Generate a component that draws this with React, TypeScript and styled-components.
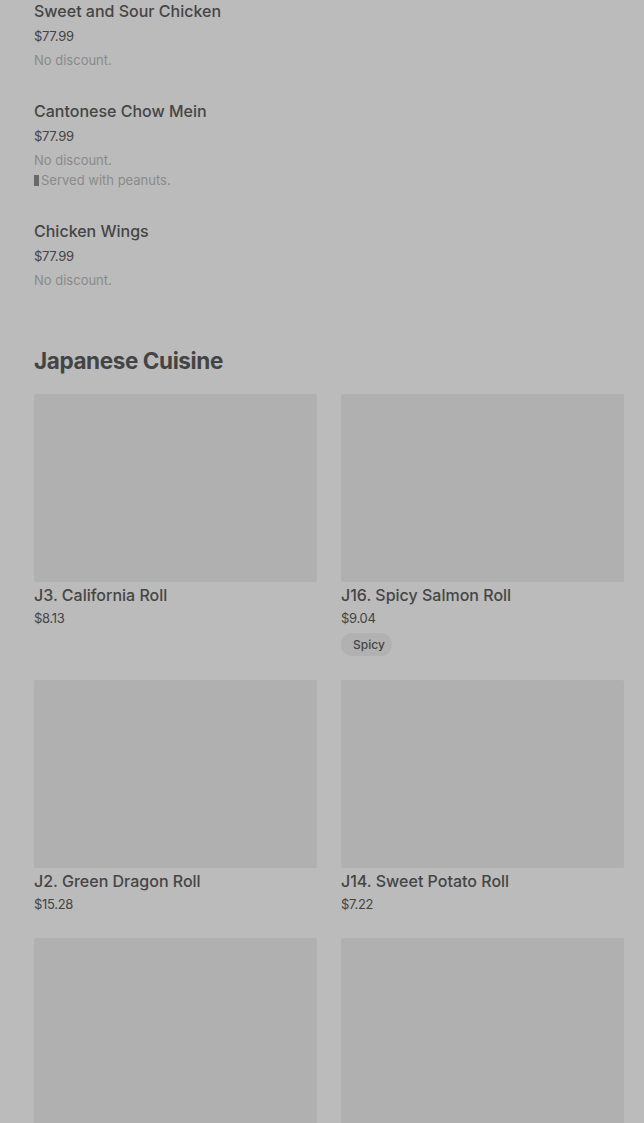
import React from "react";
import styled, { createGlobalStyle } from "styled-components";

const GlobalStyle = createGlobalStyle`
  html, body {
    margin: 0;
    padding: 0;
    background: #bbbbbb;
  }
  body {
    font-family: Inter, "Noto Sans", Roboto, sans-serif;
    color: #464646;
  }
`;

const Page = styled.div`
  padding: 0 20px 0 34px;
  height: 1123px;
  overflow: hidden;
`;

const List = styled.div`
  display: flex;
  flex-direction: column;
  gap: 30px;
`;

const Item = styled.div`
  display: flex;
  flex-direction: column;
`;

const Name = styled.div`
  font-size: 16px;
  line-height: 22px;
  font-weight: 500;
  color: #454545;
`;

const Price = styled.div`
  margin: 4px 0 4px;
  font-size: 13px;
  line-height: 20px;
  color: #444;
  letter-spacing: -0.3px;
`;

const Note = styled.div`
  font-size: 13px;
  line-height: 20px;
  color: #8a8a8a;
`;

const Mark = styled.span`
  display: inline-block;
  width: 5px;
  height: 11px;
  margin-right: 2px;
  vertical-align: -1px;
  background: #6a6a6a;
`;

const Heading = styled.h2`
  margin: 57px 0 19px;
  font-size: 22.5px;
  line-height: 28px;
  font-weight: 700;
  letter-spacing: -0.4px;
  color: #444;
`;

const Grid = styled.div`
  display: grid;
  grid-template-columns: 1fr 1fr;
  column-gap: 24px;
  row-gap: 24px;
`;

const Card = styled.div`
  display: flex;
  flex-direction: column;
`;

const Thumb = styled.div`
  height: 188px;
  background: #b0b0b0;
  border-radius: 2px;
`;

const CardName = styled.div`
  margin-top: 2px;
  font-size: 16px;
  line-height: 22px;
  font-weight: 500;
  color: #454545;
`;

const CardPrice = styled.div`
  margin-top: 2px;
  font-size: 13px;
  line-height: 20px;
  color: #444;
  letter-spacing: -0.3px;
`;

const Tag = styled.span`
  align-self: flex-start;
  margin-top: 5px;
  padding: 0 7px 0 12px;
  height: 23px;
  line-height: 23px;
  font-size: 12px;
  font-weight: 500;
  color: #444;
  background: #b1b1b1;
  border-radius: 12px;
`;

type Dish = { name: string; price: string; notes: React.ReactNode[] };
type Roll = { name: string; price: string; tag?: string };

const dishes: Dish[] = [
  { name: "Sweet and Sour Chicken", price: "$77.99", notes: ["No discount."] },
  {
    name: "Cantonese Chow Mein",
    price: "$77.99",
    notes: [
      "No discount.",
      <>
        <Mark />
        Served with peanuts.
      </>,
    ],
  },
  { name: "Chicken Wings", price: "$77.99", notes: ["No discount."] },
];

const rolls: Roll[] = [
  { name: "J3. California Roll", price: "$8.13" },
  { name: "J16. Spicy Salmon Roll", price: "$9.04", tag: "Spicy" },
  { name: "J2. Green Dragon Roll", price: "$15.28" },
  { name: "J14. Sweet Potato Roll", price: "$7.22" },
  { name: "J5. Rainbow Roll", price: "$12.50" },
  { name: "J9. Eel Avocado Roll", price: "$10.75" },
];

export default function App() {
  return (
    <>
      <GlobalStyle />
      <Page>
        <List>
          {dishes.map((d) => (
            <Item key={d.name}>
              <Name>{d.name}</Name>
              <Price>{d.price}</Price>
              {d.notes.map((n, i) => (
                <Note key={i}>{n}</Note>
              ))}
            </Item>
          ))}
        </List>
        <Heading>Japanese Cuisine</Heading>
        <Grid>
          {rolls.map((r) => (
            <Card key={r.name}>
              <Thumb />
              <CardName>{r.name}</CardName>
              <CardPrice>{r.price}</CardPrice>
              {r.tag && <Tag>{r.tag}</Tag>}
            </Card>
          ))}
        </Grid>
      </Page>
    </>
  );
}
